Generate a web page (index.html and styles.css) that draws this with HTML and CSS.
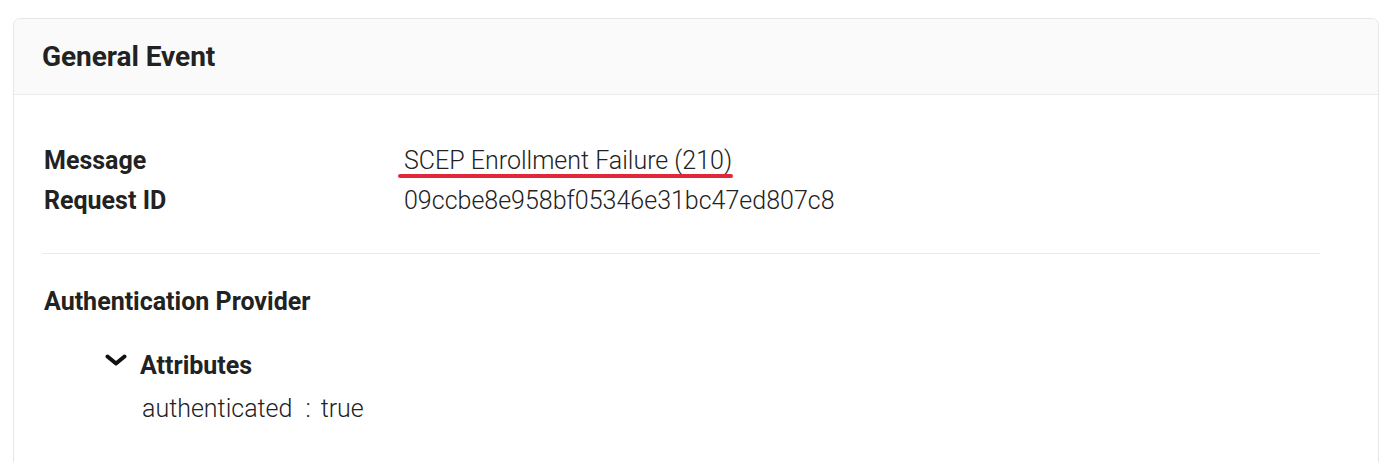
FILE: index.html
```html
<!DOCTYPE html>
<html>
<head>
<meta charset="utf-8">
<link rel="stylesheet" href="styles.css">
</head>
<body>
<div class="card">
  <div class="card-header">
    <h2 class="title">General Event</h2>
  </div>
  <div class="card-body">
    <div class="kv">
      <div class="label">Message</div>
      <div class="value"><span class="marked">SCEP Enrollment Failure (210)</span></div>
      <div class="label">Request ID</div>
      <div class="value">09ccbe8e958bf05346e31bc47ed807c8</div>
    </div>
    <hr class="divider">
    <div class="section-title">Authentication Provider</div>
    <div class="tree">
      <div class="tree-head">
        <svg class="chev" width="22" height="12" viewBox="0 0 22 12"><polyline points="2.5,2.5 11,9.5 19.5,2.5" fill="none" stroke="#111" stroke-width="4" stroke-linecap="round" stroke-linejoin="round"/></svg>
        <span class="tree-title">Attributes</span>
      </div>
      <div class="tree-item"><span class="key">authenticated</span><span class="sep">:</span><span class="val">true</span></div>
    </div>
  </div>
</div>
</body>
</html>
```

FILE: styles.css
```css
html, body {
  margin: 0;
  padding: 0;
  background: #ffffff;
}
body {
  font-family: Roboto, "Liberation Sans", sans-serif;
  color: #222222;
  padding: 18px 9px 0 13px;
}
.card {
  border: 1px solid #e6e6e6;
  border-radius: 7px;
  height: 480px;
  background: #fff;
}
.card-header {
  background: #fafafa;
  border-bottom: 1px solid #ececec;
  border-radius: 7px 7px 0 0;
  height: 75px;
  display: flex;
  align-items: center;
  padding-left: 28px;
}
.title {
  margin: 0;
  font-size: 28px;
  font-weight: 700;
  color: #222;
  line-height: 1;
  letter-spacing: -0.05px;
}
.card-body {
  padding: 46px 58px 0 30px;
}
.kv {
  display: grid;
  grid-template-columns: 360px auto;
  font-size: 25px;
  line-height: 40px;
}
.label {
  font-weight: 700;
}
.value {
  font-weight: 300;
}
.marked {
  position: relative;
}
.marked::after {
  content: "";
  position: absolute;
  left: -6px;
  right: -1px;
  bottom: -3px;
  height: 4px;
  border-radius: 2px;
  background: #e3273a;
}
.divider {
  border: 0;
  border-top: 1px solid #ebebeb;
  margin: 32px 0 0 -2px;
}
.section-title {
  font-size: 25px;
  font-weight: 700;
  line-height: 40px;
  margin-top: 28px;
}
.tree {
  padding-left: 61px;
  margin-top: 23px;
}
.tree-head {
  display: flex;
  align-items: center;
  height: 40px;
}
.chev {
  margin-right: 13px;
  margin-top: -11px;
}
.tree-title {
  font-size: 25px;
  font-weight: 700;
}
.tree-item {
  padding-left: 37px;
  font-size: 25px;
  font-weight: 300;
  line-height: 40px;
  margin-top: 4px;
}
.sep {
  display: inline-block;
  margin: 0 10px 0 13px;
}
```
